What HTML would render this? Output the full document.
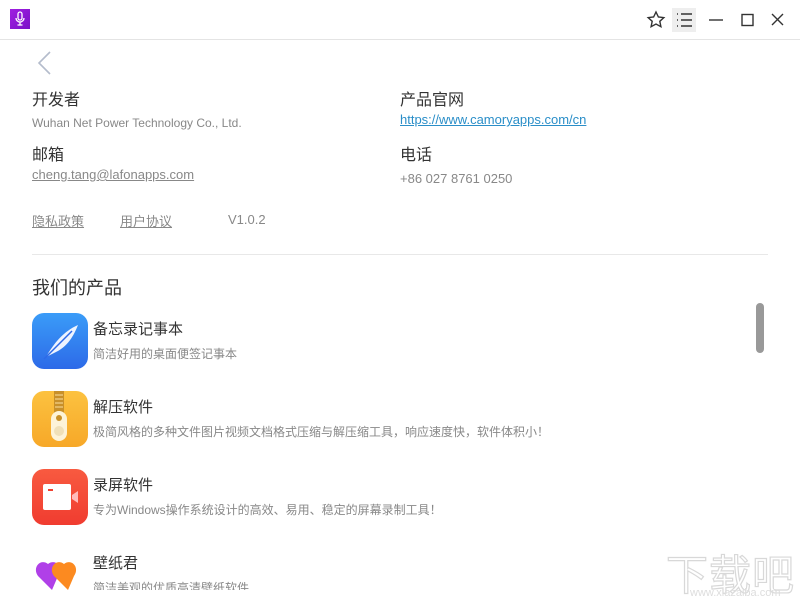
<!DOCTYPE html>
<html><head><meta charset="utf-8"><style>
*{margin:0;padding:0;box-sizing:border-box}
body{width:800px;height:600px;overflow:hidden;background:#fff;position:relative;font-family:"Liberation Sans","Noto Sans CJK SC",sans-serif;color:#333}
.a{position:absolute;white-space:nowrap}
.h{font-size:16px;color:#333}
.s{font-size:12px;color:#888}
.t{font-size:15px;color:#333}
.d{font-size:12px;color:#888}
.ic{position:absolute;left:32px;width:56px;height:56px;border-radius:12px;overflow:hidden}
</style></head><body>
<div class="a" style="left:10px;top:9px;width:20px;height:20px;background:linear-gradient(135deg,#a020e0,#7a10c8)">
<svg width="20" height="20" viewBox="0 0 20 20"><rect x="8" y="3" width="4" height="8" rx="2" fill="none" stroke="#fff" stroke-width="1.3"/><path d="M6 9a4 4 0 0 0 8 0M10 13v3M7.5 16h5" fill="none" stroke="#fff" stroke-width="1.3"/></svg></div>
<svg class="a" style="left:646px;top:10px" width="20" height="20" viewBox="0 0 20 20"><path d="M10 2l2.4 5 5.4.6-4 3.7 1.1 5.4L10 14l-4.9 2.7 1.1-5.4-4-3.7 5.4-.6z" fill="none" stroke="#333" stroke-width="1.4"/></svg>
<div class="a" style="left:672px;top:8px;width:24px;height:24px;background:#eee"></div>
<svg class="a" style="left:674px;top:10px" width="20" height="20" viewBox="0 0 20 20" stroke="#333" stroke-width="1.4"><path d="M3 4h1M3 10h1M3 16h1M7 4h11M7 10h11M7 16h11"/></svg>
<svg class="a" style="left:708px;top:10px" width="80" height="20" viewBox="0 0 80 20" stroke="#333" stroke-width="1.4" fill="none"><path d="M1 10h14"/><rect x="34" y="4.5" width="11" height="11"/><path d="M64 4l11 11M75 4L64 15"/></svg>
<div class="a" style="left:0;top:39px;width:800px;height:1px;background:#e4e4e4"></div>
<svg class="a" style="left:34px;top:50px" width="20" height="26" viewBox="0 0 20 26"><path d="M16 2L5 13l11 11" fill="none" stroke="#b4bccc" stroke-width="1.6"/></svg>
<div class="a h" style="left:32px;top:86px">开发者</div>
<div class="a s" style="left:32px;top:116px">Wuhan Net Power Technology Co., Ltd.</div>
<div class="a h" style="left:32px;top:141px">邮箱</div>
<div class="a s" style="left:32px;top:167px;text-decoration:underline;font-size:13px">cheng.tang@lafonapps.com</div>
<div class="a h" style="left:400px;top:86px">产品官网</div>
<div class="a" style="left:400px;top:112px;font-size:13px;color:#2a8ec8;text-decoration:underline">https://www.camoryapps.com/cn</div>
<div class="a h" style="left:400px;top:141px">电话</div>
<div class="a s" style="left:400px;top:171px;font-size:13px">+86 027 8761 0250</div>
<div class="a s" style="left:32px;top:211px;text-decoration:underline;font-size:13px">隐私政策</div>
<div class="a s" style="left:120px;top:211px;text-decoration:underline;font-size:13px">用户协议</div>
<div class="a s" style="left:228px;top:212px;font-size:13px">V1.0.2</div>
<div class="a" style="left:32px;top:254px;width:736px;height:1px;background:#e8e8e8"></div>
<div class="a" style="left:32px;top:274px;font-size:18px;color:#333">我们的产品</div>
<div class="a" style="left:756px;top:303px;width:8px;height:50px;border-radius:4px;background:#999"></div>

<div class="ic" style="top:313px;background:linear-gradient(180deg,#3a9cf8,#2d6ae8)"><svg width="56" height="56" viewBox="0 0 56 56"><path d="M14 44C22 30 32 18 46 12 42 22 36 34 22 40z" fill="#eef4ff"/><path d="M12 46L40 18" stroke="#2d6ae8" stroke-width="1.5"/></svg></div>
<div class="a t" style="left:93px;top:318px">备忘录记事本</div>
<div class="a d" style="left:93px;top:345px">简洁好用的桌面便签记事本</div>

<div class="ic" style="top:391px;background:linear-gradient(180deg,#fcc240,#f7a828)"><svg width="56" height="56" viewBox="0 0 56 56"><rect x="22" y="0" width="10" height="22" fill="#c8902a"/><path d="M23 4h8M23 8h8M23 12h8M23 16h8" stroke="#fde0a0"/><rect x="19" y="20" width="16" height="30" rx="8" fill="#fdf3d8"/><circle cx="27" cy="27" r="3" fill="#c8902a"/><circle cx="27" cy="40" r="5" fill="#f0e0b8"/></svg></div>
<div class="a t" style="left:93px;top:396px">解压软件</div>
<div class="a d" style="left:93px;top:423px">极简风格的多种文件图片视频文档格式压缩与解压缩工具，响应速度快，软件体积小！</div>

<div class="ic" style="top:469px;background:linear-gradient(180deg,#f85a40,#f03c30)"><svg width="56" height="56" viewBox="0 0 56 56"><rect x="11" y="15" width="28" height="26" rx="2" fill="#fff"/><path d="M40 26l6-4v12l-6-4z" fill="#fbb"/><rect x="16" y="20" width="5" height="2" fill="#f04030"/></svg></div>
<div class="a t" style="left:93px;top:474px">录屏软件</div>
<div class="a d" style="left:93px;top:501px">专为Windows操作系统设计的高效、易用、稳定的屏幕录制工具！</div>

<svg class="a" style="left:34px;top:556px" width="52" height="36" viewBox="0 0 52 36"><path d="M18 34L4 20C-2 12 6 2 14 8 22 2 30 12 24 20z" fill="#b040e8"/><path d="M34 34L20 20C14 12 22 2 30 8 38 2 46 12 40 20z" fill="#fc8a20"/></svg>
<div class="a t" style="left:93px;top:552px">壁纸君</div>
<div class="a d" style="left:93px;top:579px">简洁美观的优质高清壁纸软件</div>
<div class="a" style="left:0;top:590px;width:800px;height:10px;background:#fff"></div>
<div class="a" style="left:666px;top:542px;font-size:42px;color:#fff;-webkit-text-stroke:1.2px #d8d8d8;letter-spacing:1px">下载吧</div>
<div class="a" style="left:690px;top:587px;font-size:11px;color:#ddd">www.xiazaiba.com</div>
</body></html>
